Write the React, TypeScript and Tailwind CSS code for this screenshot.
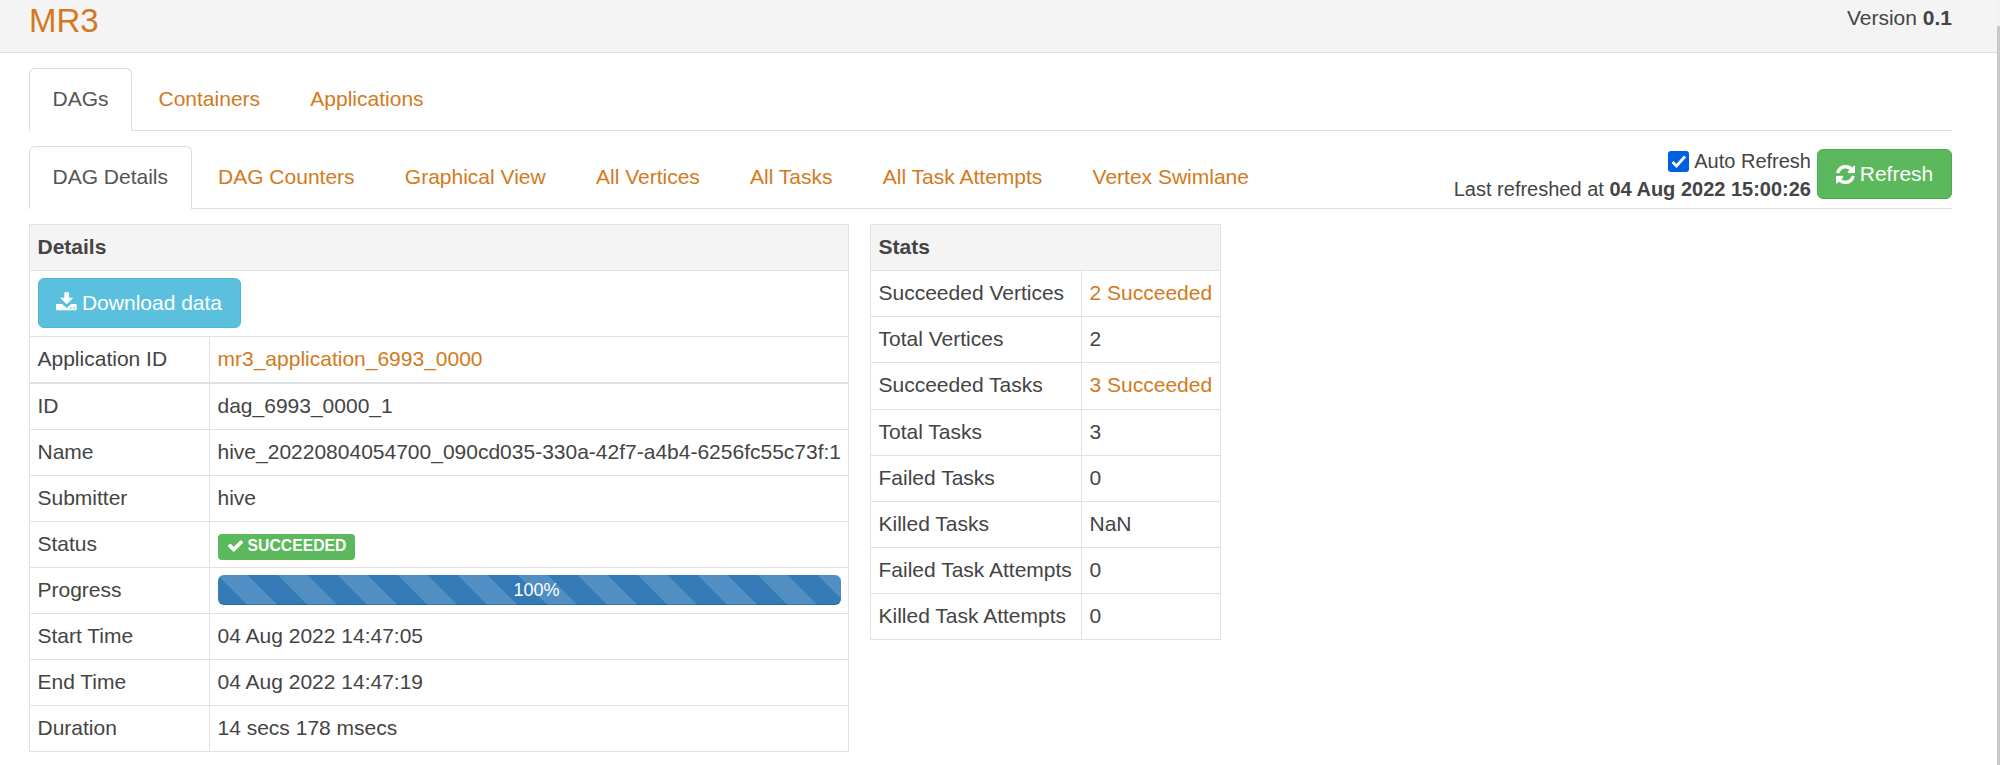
import React from "react";

const link = "text-[#d27a21]";

function Tab({ label, active }: { label: string; active?: boolean }) {
  return active ? (
    <li className="relative mr-[3px] -mb-px h-[63px] rounded-t-[6px] border border-b-0 border-[#ddd] bg-white px-[22.5px] pt-[15px] text-[#555]">
      {label}
    </li>
  ) : (
    <li className={`mr-[3.25px] h-[62px] px-[23.5px] pt-4 ${link}`}>{label}</li>
  );
}

function RefreshIcon() {
  return (
    <svg viewBox="0 0 1536 1536" className="h-[19px] w-[19px]" fill="currentColor" stroke="currentColor" strokeWidth="30">
      <path d="M1511 928q0 5-1 7-64 268-268 434.500T764 1536q-146 0-282.500-55T238 1324l-129 129q-19 19-45 19t-45-19-19-45V960q0-26 19-45t45-19h448q26 0 45 19t19 45-19 45l-137 137q71 66 161 102t187 36q134 0 250-65t186-179q11-17 53-117 8-23 30-23h192q13 0 22.500 9.500t9.500 22.500zm25-800v448q0 26-19 45t-45 19h-448q-26 0-45-19t-19-45 19-45l138-138Q969 256 768 256q-134 0-250 65T332 500q-11 17-53 117-8 23-30 23H50q-13 0-22.500-9.500T18 608v-7q65-268 270-434.500T768 0q146 0 284 55.500T1297 212l130-129q19-19 45-19t45 19 19 45z" />
    </svg>
  );
}

function DownloadIcon() {
  return (
    <svg viewBox="0 0 63 57" className="mt-[-4px] h-[19px] w-[21px]" fill="currentColor">
      <path d="M25 1h14v16h13L32 37 12 17h13z" />
      <path
        fillRule="evenodd"
        d="M2 36h16l14 12 14-12h14q2 0 2 2v15q0 2-2 2H2q-2 0-2-2V38q0-2 2-2zM42 46v4h4v-4zM52 46v4h4v-4z"
      />
    </svg>
  );
}

function CheckIcon() {
  return (
    <svg viewBox="0 0 1550 1188" className="h-[12px] w-[15px]" fill="currentColor">
      <path d="M1550 232q0 40-28 68l-724 724-136 136q-28 28-68 28t-68-28l-136-136L28 662q-28-28-28-68t28-68l136-136q28-28 68-28t68 28l294 295L1250 28q28-28 68-28t68 28l136 136q28 28 28 68z" />
    </svg>
  );
}

const cell = "border-r border-b border-[#e1e1e1] p-0 pl-[7.5px] align-top";

function Row({ name, children, h = "h-[46px]" }: { name: string; children: React.ReactNode; h?: string }) {
  return (
    <tr className={h}>
      <td className={`${cell} pt-[7px]`}>{name}</td>
      <td className={`${cell} pt-[7px]`}>{children}</td>
    </tr>
  );
}

const stats: [string, string, boolean?][] = [
  ["Succeeded Vertices", "2 Succeeded", true],
  ["Total Vertices", "2"],
  ["Succeeded Tasks", "3 Succeeded", true],
  ["Total Tasks", "3"],
  ["Failed Tasks", "0"],
  ["Killed Tasks", "NaN"],
  ["Failed Task Attempts", "0"],
  ["Killed Task Attempts", "0"],
];

const table = "table-fixed border-separate border-spacing-0 border-t border-l border-[#e1e1e1]";

export default function App() {
  return (
    <div className="flex h-[765px] w-full overflow-hidden bg-white font-['Liberation_Sans',Arial,sans-serif] text-[21px] leading-[30px] text-[#444]">
      <div className="min-w-0 flex-1">
        <header className="flex h-[53px] items-start justify-between border-b border-[#ddd] bg-[#f4f4f4] pr-[45px] pl-[29px]">
          <h1 className={`pt-px text-[33px] leading-[40px] ${link}`}>MR3</h1>
          <div className="pt-[3px]">
            Version <b>0.1</b>
          </div>
        </header>

        <main className="pr-[45px] pl-[29px]">
          <ul className="mt-[15px] flex h-[63px] border-b border-[#ddd]">
            <Tab label="DAGs" active />
            <Tab label="Containers" />
            <Tab label="Applications" />
          </ul>

          <div className="mt-[15px] flex h-[63px] justify-between border-b border-[#ddd]">
            <ul className="flex">
              <Tab label="DAG Details" active />
              <Tab label="DAG Counters" />
              <Tab label="Graphical View" />
              <Tab label="All Vertices" />
              <Tab label="All Tasks" />
              <Tab label="All Task Attempts" />
              <Tab label="Vertex Swimlane" />
            </ul>
            <div className="flex pt-[3px]">
              <div className="mt-[-2px] mr-[6px] text-right text-[20px] leading-[28px]">
                <div className="flex items-center justify-end gap-[5px]">
                  <span className="flex h-[21px] w-[21px] items-center justify-center rounded-[3px] bg-[#0060df]">
                    <svg viewBox="0 0 21 21" className="h-[21px] w-[21px]" fill="none" stroke="#fff" strokeWidth="2.8">
                      <path d="M4.500 11l4 4L17 5.500" />
                    </svg>
                  </span>
                  Auto Refresh
                </div>
                <div>
                  Last refreshed at <b>04 Aug 2022 15:00:26</b>
                </div>
              </div>
              <button className="flex h-[50px] w-[135px] items-center justify-center gap-[5px] rounded-[6px] border border-[#4cae4c] bg-[#5cb85c] text-white">
                <RefreshIcon />
                Refresh
              </button>
            </div>
          </div>

          <div className="mt-[15px] flex items-start gap-[21px]">
            <table className={`${table} w-[820px]`}>
              <colgroup>
                <col className="w-[180px]" />
                <col />
              </colgroup>
              <tbody>
                <tr className="h-[46px]">
                  <th colSpan={2} className={`${cell} bg-[#f4f4f4] pt-[7px] text-left`}>Details</th>
                </tr>
                <tr className="h-[66px]">
                  <td colSpan={2} className={`${cell} pt-[7px]`}>
                    <button className="flex h-[50px] w-[203px] items-center justify-center gap-[5px] rounded-[6px] border border-[#46b8da] bg-[#5bc0de] text-white">
                      <DownloadIcon />
                      Download data
                    </button>
                  </td>
                </tr>
                <tr className="h-[47px]">
                  <td className={`${cell} border-b-2 pt-[7px]`}>Application ID</td>
                  <td className={`${cell} border-b-2 pt-[7px] ${link}`}>mr3_application_6993_0000</td>
                </tr>
                <Row name="ID">dag_6993_0000_1</Row>
                <Row name="Name">hive_20220804054700_090cd035-330a-42f7-a4b4-6256fc55c73f:1</Row>
                <Row name="Submitter">hive</Row>
                <Row name="Status">
                  <span className="mt-[5px] flex h-[26px] w-[137px] items-start rounded-[4px] bg-[#5cb85c] pl-[10px] text-[15.75px] leading-[23px] font-bold text-white">
                    <span className="mt-[6px] mr-[5px]">
                      <CheckIcon />
                    </span>
                    SUCCEEDED
                  </span>
                </Row>
                <Row name="Progress">
                  <div className="h-[30px] w-[623px] rounded-[6px] bg-[#337ab7] bg-[linear-gradient(45deg,rgba(255,255,255,.15)_25%,transparent_25%,transparent_50%,rgba(255,255,255,.15)_50%,rgba(255,255,255,.15)_75%,transparent_75%,transparent)] bg-size-[60px_60px] pl-[15px] text-center text-[18px] leading-[30px] text-white shadow-[inset_0_-1px_0_rgba(0,0,0,.15)]">
                    100%
                  </div>
                </Row>
                <Row name="Start Time">04 Aug 2022 14:47:05</Row>
                <Row name="End Time">04 Aug 2022 14:47:19</Row>
                <Row name="Duration">14 secs 178 msecs</Row>
              </tbody>
            </table>

            <table className={`${table} w-[351px]`}>
              <colgroup>
                <col className="w-[211px]" />
                <col />
              </colgroup>
              <tbody>
                <tr className="h-[46px]">
                  <th colSpan={2} className={`${cell} bg-[#f4f4f4] pt-[7px] text-left`}>Stats</th>
                </tr>
                {stats.map(([name, value, isLink]) => (
                  <Row key={name} name={name} h={name === "Succeeded Tasks" ? "h-[47px]" : "h-[46px]"}>
                    <span className={isLink ? link : ""}>{value}</span>
                  </Row>
                ))}
              </tbody>
            </table>
          </div>
        </main>
      </div>
      <div className="w-[3px] bg-[#f1f1f1] pt-[26px]">
        <div className="h-full bg-[#c9c9c9]" />
      </div>
    </div>
  );
}
